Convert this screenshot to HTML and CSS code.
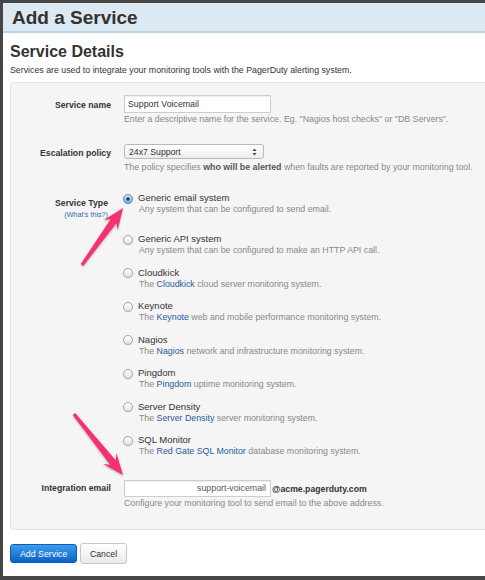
FILE: index.html
```html
<!DOCTYPE html>
<html>
<head>
<meta charset="utf-8">
<title>Add a Service</title>
<link rel="stylesheet" href="styles.css">
</head>
<body>
<div class="window">
  <div class="titlebar"><h1>Add a Service</h1></div>
  <div class="content">
    <h2>Service Details</h2>
    <p class="intro">Services are used to integrate your monitoring tools with the PagerDuty alerting system.</p>
    <div class="panel">
      <div class="row row-name">
        <div class="label">Service name</div>
        <div class="field">
          <div class="input">Support Voicemail</div>
          <div class="help">Enter a descriptive name for the service. Eg. "Nagios host checks" or "DB Servers".</div>
        </div>
      </div>
      <div class="row row-policy">
        <div class="label">Escalation policy</div>
        <div class="field">
          <div class="select"><span>24x7 Support</span>
            <svg class="updown" width="5" height="8" viewBox="0 0 5 8"><path d="M2.5 0.5 L4.5 3 L0.5 3 Z M2.5 7.5 L4.5 5 L0.5 5 Z" fill="#444"/></svg>
          </div>
          <div class="help help-policy">The policy specifies <b>who will be alerted</b> when faults are reported by your monitoring tool.</div>
        </div>
      </div>
      <div class="row row-type">
        <div class="label label-type">Service Type<a class="whats">(What's this?)</a></div>
        <div class="field">
          <div class="option first">
            <span class="radio checked"></span>
            <div class="opt-text"><div class="opt-name">Generic email system</div><div class="opt-desc">Any system that can be configured to send email.</div></div>
          </div>
          <div class="option">
            <span class="radio"></span>
            <div class="opt-text"><div class="opt-name">Generic API system</div><div class="opt-desc">Any system that can be configured to make an HTTP API call.</div></div>
          </div>
          <div class="option">
            <span class="radio"></span>
            <div class="opt-text"><div class="opt-name">Cloudkick</div><div class="opt-desc">The <a>Cloudkick</a> cloud server monitoring system.</div></div>
          </div>
          <div class="option">
            <span class="radio"></span>
            <div class="opt-text"><div class="opt-name">Keynote</div><div class="opt-desc">The <a>Keynote</a> web and mobile performance monitoring system.</div></div>
          </div>
          <div class="option">
            <span class="radio"></span>
            <div class="opt-text"><div class="opt-name">Nagios</div><div class="opt-desc">The <a>Nagios</a> network and infrastructure monitoring system.</div></div>
          </div>
          <div class="option">
            <span class="radio"></span>
            <div class="opt-text"><div class="opt-name">Pingdom</div><div class="opt-desc">The <a>Pingdom</a> uptime monitoring system.</div></div>
          </div>
          <div class="option">
            <span class="radio"></span>
            <div class="opt-text"><div class="opt-name">Server Density</div><div class="opt-desc">The <a>Server Density</a> server monitoring system.</div></div>
          </div>
          <div class="option last">
            <span class="radio"></span>
            <div class="opt-text"><div class="opt-name">SQL Monitor</div><div class="opt-desc">The <a>Red Gate SQL Monitor</a> database monitoring system.</div></div>
          </div>
        </div>
      </div>
      <div class="row row-email">
        <div class="label">Integration email</div>
        <div class="field">
          <div class="email-line"><div class="input input-email">support-voicemail</div><span class="domain">@acme.pagerduty.com</span></div>
          <div class="help help-email">Configure your monitoring tool to send email to the above address.</div>
        </div>
      </div>
    </div>
    <div class="actions">
      <button class="btn btn-primary">Add Service</button>
      <button class="btn btn-cancel">Cancel</button>
    </div>
  </div>
</div>
<svg class="arrows" width="485" height="580" viewBox="0 0 485 580">
  <polygon class="arrow" points="83.22,265.88 116.58,223.09 117.64,230.01 123,208 103.84,220.09 110.74,218.89 80.78,264.12"/>
  <polygon class="arrow" points="72.83,414.94 110.17,464.77 103.22,463.94 123,475 116.48,453.30 115.79,460.27 75.17,413.06"/>
</svg>
</body>
</html>
```
FILE: styles.css
```css
* { box-sizing: border-box; }
html { background: #464646; height: 100%; }
body {
  margin: 0;
  font-family: "Liberation Sans", Arial, Helvetica, sans-serif;
  color: #333;
  overflow: hidden;
}
.window {
  margin: 3px 0 0 3px;
  background: #fff;
  padding-bottom: 12px;
}
.titlebar {
  height: 30px;
  background: #dce8f2;
  border-bottom: 2px solid #bad2e6;
  padding: 1px 0 0 9px;
}
h1 {
  margin: 0;
  font-size: 19px;
  line-height: 27px;
  font-weight: bold;
  color: #333;
}
.content { padding-left: 7px; }
h2 {
  margin: 9.7px 0 0 0;
  font-size: 16px;
  line-height: 18px;
  font-weight: bold;
  color: #333;
}
.intro {
  margin: 4.5px 0 0 0;
  font-size: 8.8px;
  line-height: 11px;
  color: #333;
}
.panel {
  margin-top: 6px;
  background: #f5f5f5;
  border: 1px solid #e3e3e3;
  border-right: none;
  border-radius: 4px 0 0 4px;
  padding: 12px 0 20.5px 0;
}
.row {
  display: grid;
  grid-template-columns: 100px 1fr;
  column-gap: 13px;
}
.label {
  text-align: right;
  font-weight: bold;
  font-size: 8.7px;
  line-height: 11px;
  color: #333;
}
.row-name .label { padding-top: 5.2px; }
.row-policy { margin-top: 19px; }
.row-policy .label { padding-top: 4.3px; }
.row-type { margin-top: 19.6px; }
.label-type { padding-top: 5.5px; padding-right: 3px; }
.whats {
  display: block;
  margin-top: 1.4px;
  font-weight: normal;
  font-size: 7.2px;
  line-height: 9px;
  color: #2a6fb5;
}
.row-email { margin-top: 22.7px; }
.row-email .label { padding-top: 3.5px; }

.input {
  width: 147px;
  height: 18px;
  background: #fff;
  border: 1px solid #cdcdcd;
  box-shadow: inset 0 1px 1px rgba(0,0,0,0.08);
  font-size: 8.8px;
  line-height: 16px;
  padding: 0 3px;
  color: #333;
}
.help {
  margin-top: 1px;
  font-size: 8.8px;
  line-height: 11px;
  color: #888;
}
.help b { color: #555; }
.help-policy { margin-top: 2.5px; }
.help-email { margin-top: 0.5px; }

.select {
  width: 140px;
  height: 15px;
  display: flex;
  align-items: center;
  justify-content: space-between;
  padding: 0 6px 0 4px;
  border: 1px solid #b9b9b9;
  border-radius: 3px;
  background: linear-gradient(#ffffff, #ececec);
  font-size: 8.7px;
  color: #333;
}
.updown { display: block; }

.option { display: flex; margin-bottom: 10.5px; }
.option.first { margin-bottom: 18px; }
.option.last { margin-bottom: 0; }
.radio {
  flex: none;
  width: 10px;
  height: 10px;
  margin: 1.7px 5px 0 -1px;
  border-radius: 50%;
  border: 1px solid #a3a3a3;
  background: linear-gradient(#ffffff, #e2e2e2);
  box-shadow: 0 0.5px 0.5px rgba(0,0,0,0.1);
}
.radio.checked {
  border-color: #5b89b8;
  background: radial-gradient(circle, #1e3550 0, #1e3550 1.4px, transparent 1.8px), linear-gradient(#cfe4fb, #6ea9e6);
}
.opt-name {
  font-size: 9.5px;
  line-height: 12px;
  color: #333;
}
.opt-desc {
  font-size: 8.8px;
  line-height: 11px;
  color: #888;
  padding-left: 1px;
}
.opt-desc a { color: #1f5c9b; }

.email-line { display: flex; align-items: center; }
.input-email {
  height: 17.3px;
  text-align: right;
  padding-right: 4px;
  line-height: 15.3px;
  color: #555;
}
.domain {
  margin-left: 1px;
  font-weight: bold;
  font-size: 8.7px;
  color: #333;
}

.actions {
  margin-top: 13px;
  display: flex;
  align-items: center;
  gap: 3px;
}
.btn {
  font-family: "Liberation Sans", Arial, Helvetica, sans-serif;
  border-radius: 3px;
  padding: 0;
  cursor: pointer;
}
.btn-primary {
  width: 67.4px;
  height: 18.4px;
  font-size: 8.8px;
  color: #fff;
  border: 1px solid #0b5db8;
  background: linear-gradient(#3d9cec, #0a63c6);
}
.btn-cancel {
  width: 46.3px;
  height: 20.7px;
  font-size: 8.7px;
  color: #333;
  border: 1px solid #c8c8c8;
  background: linear-gradient(#ffffff, #e9e9e9);
}

.arrows {
  position: absolute;
  top: 0;
  left: 0;
  pointer-events: none;
}
.arrow {
  fill: #f5326f;
  filter: drop-shadow(0 1px 1px rgba(0,0,0,0.3));
}
```
